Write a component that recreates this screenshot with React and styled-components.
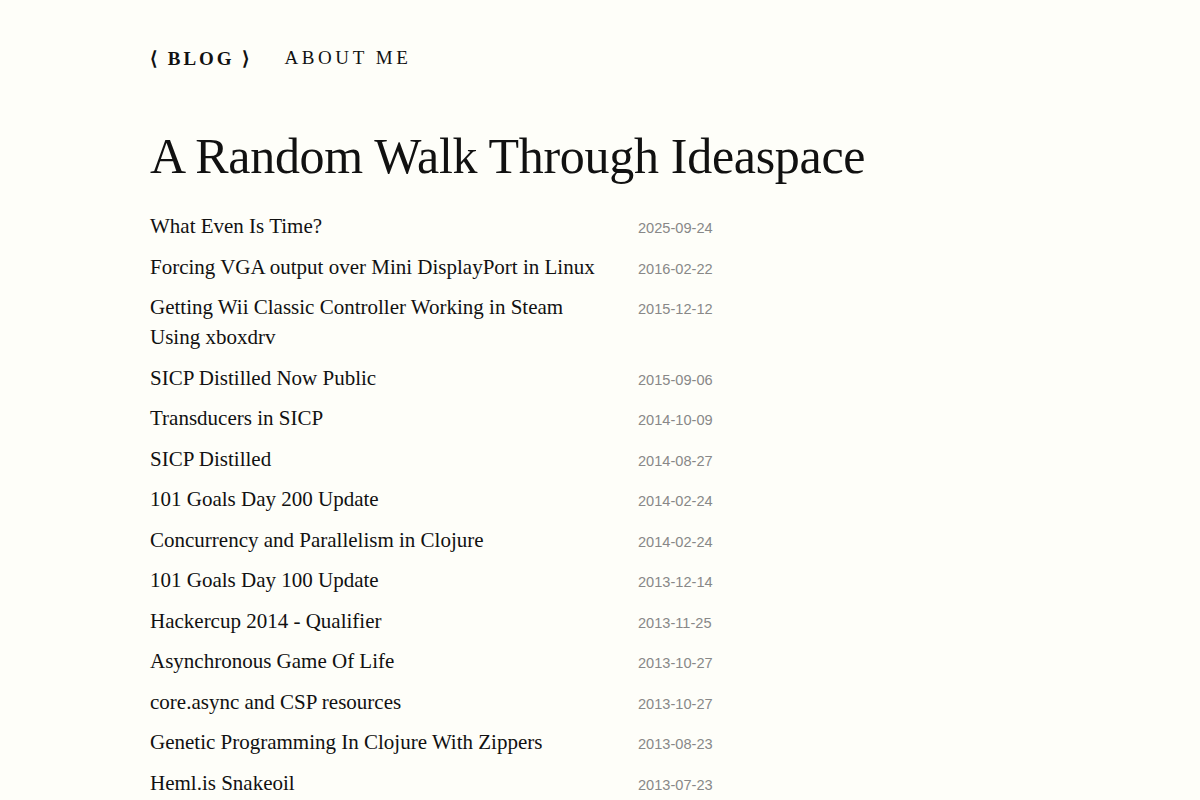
import React from "react";
import styled, { createGlobalStyle } from "styled-components";

const GlobalStyle = createGlobalStyle`
  html, body {
    margin: 0;
    padding: 0;
    background: #fefef9;
  }
  body {
    font-family: "Liberation Serif", "Times New Roman", serif;
    color: #111;
  }
`;

const Page = styled.div`
  padding: 44px 150px 0;
`;

const Nav = styled.nav`
  display: flex;
  align-items: center;
  gap: 32px;
  height: 28px;
`;

const NavLink = styled.a`
  font-size: 19px;
  letter-spacing: ${({ $active }) => ($active ? "3px" : "3.6px")};
  text-decoration: none;
  color: #111;
  font-weight: ${({ $active }) => ($active ? "bold" : "normal")};
`;

const Title = styled.h1`
  font-size: 50px;
  font-weight: normal;
  margin: 54px 0 20px;
  line-height: 60px;
  letter-spacing: -0.3px;
`;

const PostList = styled.div`
  display: grid;
  grid-template-columns: 488px auto;
  align-items: baseline;
`;

const PostTitle = styled.a`
  font-size: 21px;
  line-height: 30px;
  padding: 5.25px 26px 5.25px 0;
  color: #111;
  text-decoration: none;
`;

const PostDate = styled.span`
  font-family: "Liberation Sans", Arial, sans-serif;
  font-size: 14.6px;
  color: #888;
`;

const posts = [
  ["What Even Is Time?", "2025-09-24"],
  ["Forcing VGA output over Mini DisplayPort in Linux", "2016-02-22"],
  ["Getting Wii Classic Controller Working in Steam Using xboxdrv", "2015-12-12"],
  ["SICP Distilled Now Public", "2015-09-06"],
  ["Transducers in SICP", "2014-10-09"],
  ["SICP Distilled", "2014-08-27"],
  ["101 Goals Day 200 Update", "2014-02-24"],
  ["Concurrency and Parallelism in Clojure", "2014-02-24"],
  ["101 Goals Day 100 Update", "2013-12-14"],
  ["Hackercup 2014 - Qualifier", "2013-11-25"],
  ["Asynchronous Game Of Life", "2013-10-27"],
  ["core.async and CSP resources", "2013-10-27"],
  ["Genetic Programming In Clojure With Zippers", "2013-08-23"],
  ["Heml.is Snakeoil", "2013-07-23"],
];

export default function App() {
  return (
    <Page>
      <GlobalStyle />
      <Nav>
        <NavLink href="#" $active>
          ⟨ BLOG ⟩
        </NavLink>
        <NavLink href="#">ABOUT ME</NavLink>
      </Nav>
      <Title>A Random Walk Through Ideaspace</Title>
      <PostList>
        {posts.map(([title, date]) => (
          <React.Fragment key={title}>
            <PostTitle href="#">{title}</PostTitle>
            <PostDate>{date}</PostDate>
          </React.Fragment>
        ))}
      </PostList>
    </Page>
  );
}
